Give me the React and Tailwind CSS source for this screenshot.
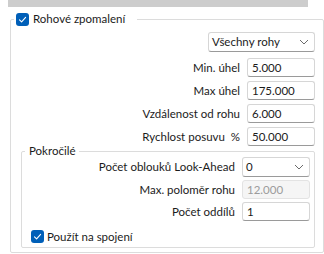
import React from 'react'

const font = { fontFamily: 'Lato, "Noto Sans", sans-serif' }

const Check = () => (
  <span className="flex w-[13px] h-[13px] shrink-0 items-center justify-center rounded-[3px] bg-[#005fb8]">
    <svg width="9" height="9" viewBox="0 0 9 9" fill="none">
      <path d="M1.5 4.8 L3.6 6.8 L7.6 2.4" stroke="white" strokeWidth="1.1" strokeLinecap="round" strokeLinejoin="round" />
    </svg>
  </span>
)

const Chevron = () => (
  <svg width="10" height="6" viewBox="0 0 10 6" fill="none">
    <path d="M1 1 L5 5 L9 1" stroke="#6b6b6b" strokeWidth="1" />
  </svg>
)

const Select = ({ value, width }) => (
  <div
    className={`flex h-[20px] ${width} items-center justify-between rounded-[3px] border border-[#d6d6d6] border-b-[#9a9a9a] bg-white pl-[3px] pr-[5px]`}
  >
    <span className="leading-none">{value}</span>
    <Chevron />
  </div>
)

const Field = ({ value, disabled }) => (
  <div
    className={`flex h-[19px] w-[68px] items-center rounded-[3px] border pl-[4px] ${
      disabled
        ? 'border-[#e3e3e3] bg-[#f5f5f5] text-[#9c9c9c]'
        : 'border-[#d6d6d6] border-b-[#9a9a9a] bg-white'
    }`}
  >
    <span className="leading-none">{value}</span>
  </div>
)

const Row = ({ label, children }) => (
  <div className="flex w-full items-center justify-end gap-[7px]">
    <span className="leading-none whitespace-pre">{label}</span>
    {children}
  </div>
)

export default function App() {
  return (
    <div className="w-[324px] h-[254px] overflow-hidden bg-white text-[11.5px] text-[#1b1b1b]" style={font}>
      <div className="ml-[8px] h-[7px] w-[300px] bg-[#cdcdcd]" />

      <fieldset className="ml-[10px] mt-[9px] h-[237px] w-[309px] rounded-[2px] border border-[#dcdcdc] pl-[10px] pr-[8px] pt-[10px]">
        {/* legend sits inside the fieldset padding, pull it back to the border */}
        <legend className="-ml-[7px] h-[6px] pl-[2px] pr-[12px]">
          <div className="flex h-[6px] items-center gap-[4px]">
            <Check />
            <span className="leading-none">Rohové zpomalení</span>
          </div>
        </legend>

        <div className="flex flex-col">
          <div className="flex justify-end">
            <Select value="Všechny rohy" width="w-[107px]" />
          </div>
          <div className="mt-[6px] flex flex-col gap-[4px]">
            <Row label="Min. úhel">
              <Field value="5.000" />
            </Row>
            <Row label="Max úhel">
              <Field value="175.000" />
            </Row>
            <Row label="Vzdálenost od rohu">
              <Field value="6.000" />
            </Row>
            <Row label="Rychlost posuvu  %">
              <Field value="50.000" />
            </Row>
          </div>

          <fieldset className="mt-[2px] h-[100px] w-[294px] rounded-[2px] border border-[#dcdcdc] pl-[9px] pr-[4px] pt-[3px]">
            <legend className="-ml-[6px] h-[6px] px-[4px]">
              <span className="block leading-[6px]">Pokročilé</span>
            </legend>
            <div className="flex flex-col gap-[3px]">
              <Row label="Počet oblouků Look-Ahead">
                <Select value="0" width="w-[68px]" />
              </Row>
              <Row label="Max. poloměr rohu">
                <Field value="12.000" disabled />
              </Row>
              <Row label="Počet oddílů">
                <Field value="1" />
              </Row>
            </div>
            <div className="mt-[9px] flex items-center gap-[3px]">
              <Check />
              <span className="leading-none">Použít na spojení</span>
            </div>
          </fieldset>
        </div>
      </fieldset>
    </div>
  )
}
